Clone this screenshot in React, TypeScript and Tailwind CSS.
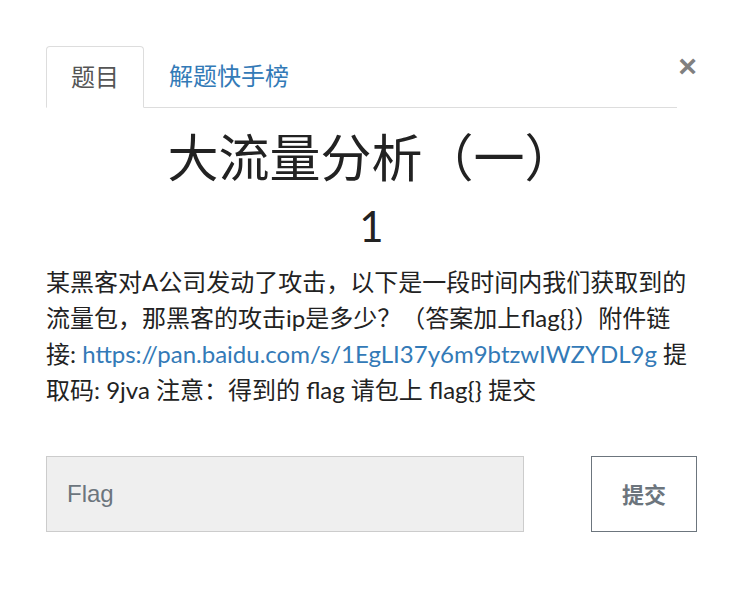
export default function App() {
  return (
    <div className="min-h-[601px] w-[742px] bg-white pl-[46px] pr-[45px] pt-[46px] text-[#333] [font-family:Lato,'Noto_Sans_CJK_SC',sans-serif]">
      <div className="flex items-start">
        <ul className="flex flex-1 border-b border-[#ddd]">
          <li className="-mb-px rounded-t-[4px] border border-[#ddd] border-b-white bg-white px-[24px] pb-[14px] pt-[14px] text-[24px] leading-[32px] text-[#555]">
            题目
          </li>
          <li className="px-[25px] pb-[14px] pt-[14px] text-[24px] leading-[32px] text-[#337ab7]">解题快手榜</li>
        </ul>
        <button className="mt-[4px] w-[20px] text-right text-[32px] font-bold leading-[32px] text-[#808080] [font-family:'Liberation_Sans',sans-serif]">
          ×
        </button>
      </div>

      <h1 className="mt-[20px] text-center text-[51px] leading-[60px] text-[#222]">大流量分析（一）</h1>
      <p className="text-center text-[42px] leading-[76px] text-[#222]">1</p>

      <p className="text-[24px] leading-[36px] text-[#222]">
        某黑客对A公司发动了攻击，以下是一段时间内我们获取到的流量包，那黑客的攻击ip是多少？（答案加上{"flag{}"}）附件链接:{" "}
        <a className="text-[#337ab7]">https://pan.baidu.com/s/1EgLI37y6m9btzwIWZYDL9g</a> 提取码: 9jva 注意：得到的 flag 请包上{" "}
        {"flag{}"} 提交
      </p>

      <form className="mt-[48px] flex items-stretch justify-between">
        <input
          placeholder="Flag"
          className="h-[76px] w-[478px] border border-[#ccc] bg-[#efefef] px-[20px] text-[24px] text-[#555] placeholder:text-[#6c757d] [font-family:'Liberation_Sans',sans-serif]"
        />
        <button
          type="button"
          className="h-[76px] w-[106px] border border-[#6c757d] bg-white text-[22px] font-bold text-[#6c757d]"
        >
          提交
        </button>
      </form>
    </div>
  );
}
